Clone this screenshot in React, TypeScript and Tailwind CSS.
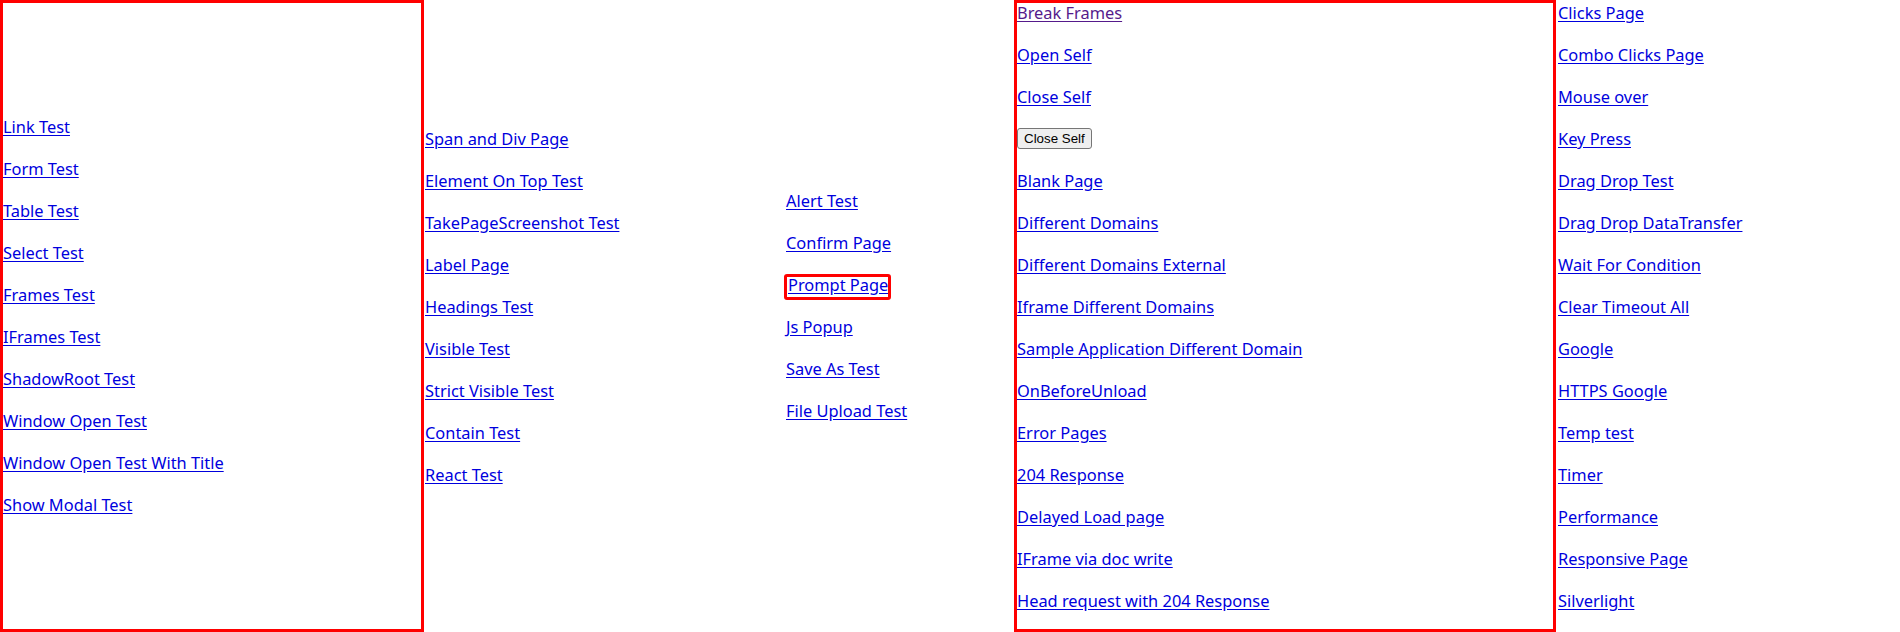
import React from "react";

const col1 = [
  "Link Test",
  "Form Test",
  "Table Test",
  "Select Test",
  "Frames Test",
  "IFrames Test",
  "ShadowRoot Test",
  "Window Open Test",
  "Window Open Test With Title",
  "Show Modal Test",
];

const col2 = [
  "Span and Div Page",
  "Element On Top Test",
  "TakePageScreenshot Test",
  "Label Page",
  "Headings Test",
  "Visible Test",
  "Strict Visible Test",
  "Contain Test",
  "React Test",
];

const col4a = ["Open Self", "Close Self"];
const col4b = [
  "Blank Page",
  "Different Domains",
  "Different Domains External",
  "Iframe Different Domains",
  "Sample Application Different Domain",
  "OnBeforeUnload",
  "Error Pages",
  "204 Response",
  "Delayed Load page",
  "IFrame via doc write",
  "Head request with 204 Response",
];

const col5 = [
  "Clicks Page",
  "Combo Clicks Page",
  "Mouse over",
  "Key Press",
  "Drag Drop Test",
  "Drag Drop DataTransfer",
  "Wait For Condition",
  "Clear Timeout All",
  "Google",
  "HTTPS Google",
  "Temp test",
  "Timer",
  "Performance",
  "Responsive Page",
  "Silverlight",
];

function Item({ label, visited }: { label: string; visited?: boolean }) {
  return (
    <div className="shrink-0 h-[26px] leading-[26px] whitespace-nowrap">
      <a
        href="#"
        className={
          "underline underline-offset-[2px] " +
          (visited ? "text-[#551a8b]" : "text-[#0000dd]")
        }
      >
        {label}
      </a>
    </div>
  );
}

export default function App() {
  return (
    <div
      className="flex h-[632px] w-[1900px] overflow-hidden bg-white text-[16.4px]"
      style={{ fontFamily: '"Noto Sans", "Open Sans", sans-serif' }}
    >
      {/* Column 1 */}
      <div className="flex w-[424px] shrink-0 flex-col justify-center gap-[16px] border-[3px] border-[#ff0000]">
        {col1.map((l) => (
          <Item key={l} label={l} />
        ))}
      </div>

      {/* Column 2 */}
      <div className="flex w-[362px] shrink-0 flex-col justify-center gap-[16px] pb-[19px] pl-[1px]">
        {col2.map((l) => (
          <Item key={l} label={l} />
        ))}
      </div>

      {/* Column 3 */}
      <div className="flex w-[228px] shrink-0 flex-col justify-center gap-[16px] pb-[21px]">
        <Item label="Alert Test" />
        <Item label="Confirm Page" />
        <div className="shrink-0 h-[26px] leading-[26px] whitespace-nowrap">
          <span className="relative ml-[2px] inline-block">
            <a href="#" className="underline underline-offset-[2px] text-[#0000dd]">
              Prompt Page
            </a>
            <span className="pointer-events-none absolute -left-[4px] -right-[3px] top-[2px] -bottom-[2px] rounded-[3px] border-[3px] border-[#ff0000]" />
          </span>
        </div>
        <Item label="Js Popup" />
        <Item label="Save As Test" />
        <Item label="File Upload Test" />
      </div>

      {/* Column 4 */}
      <div className="flex w-[542px] shrink-0 flex-col justify-center gap-[16px] border-[3px] border-[#ff0000] pb-[19px]">
        <Item label="Break Frames" visited />
        {col4a.map((l) => (
          <Item key={l} label={l} />
        ))}
        <div className="flex h-[26px] shrink-0 items-center">
          <button
            type="button"
            className="h-[21px] rounded-[3px] border border-[#767676] bg-[#efefef] px-[6px] text-[13.33px] leading-[19px] text-black"
            style={{ fontFamily: '"Liberation Sans", Arial, sans-serif' }}
          >
            Close Self
          </button>
        </div>
        {col4b.map((l) => (
          <Item key={l} label={l} />
        ))}
      </div>

      {/* Column 5 */}
      <div className="flex flex-1 flex-col justify-center gap-[16px] pb-[19px] pl-[2px]">
        {col5.map((l) => (
          <Item key={l} label={l} />
        ))}
      </div>
    </div>
  );
}
